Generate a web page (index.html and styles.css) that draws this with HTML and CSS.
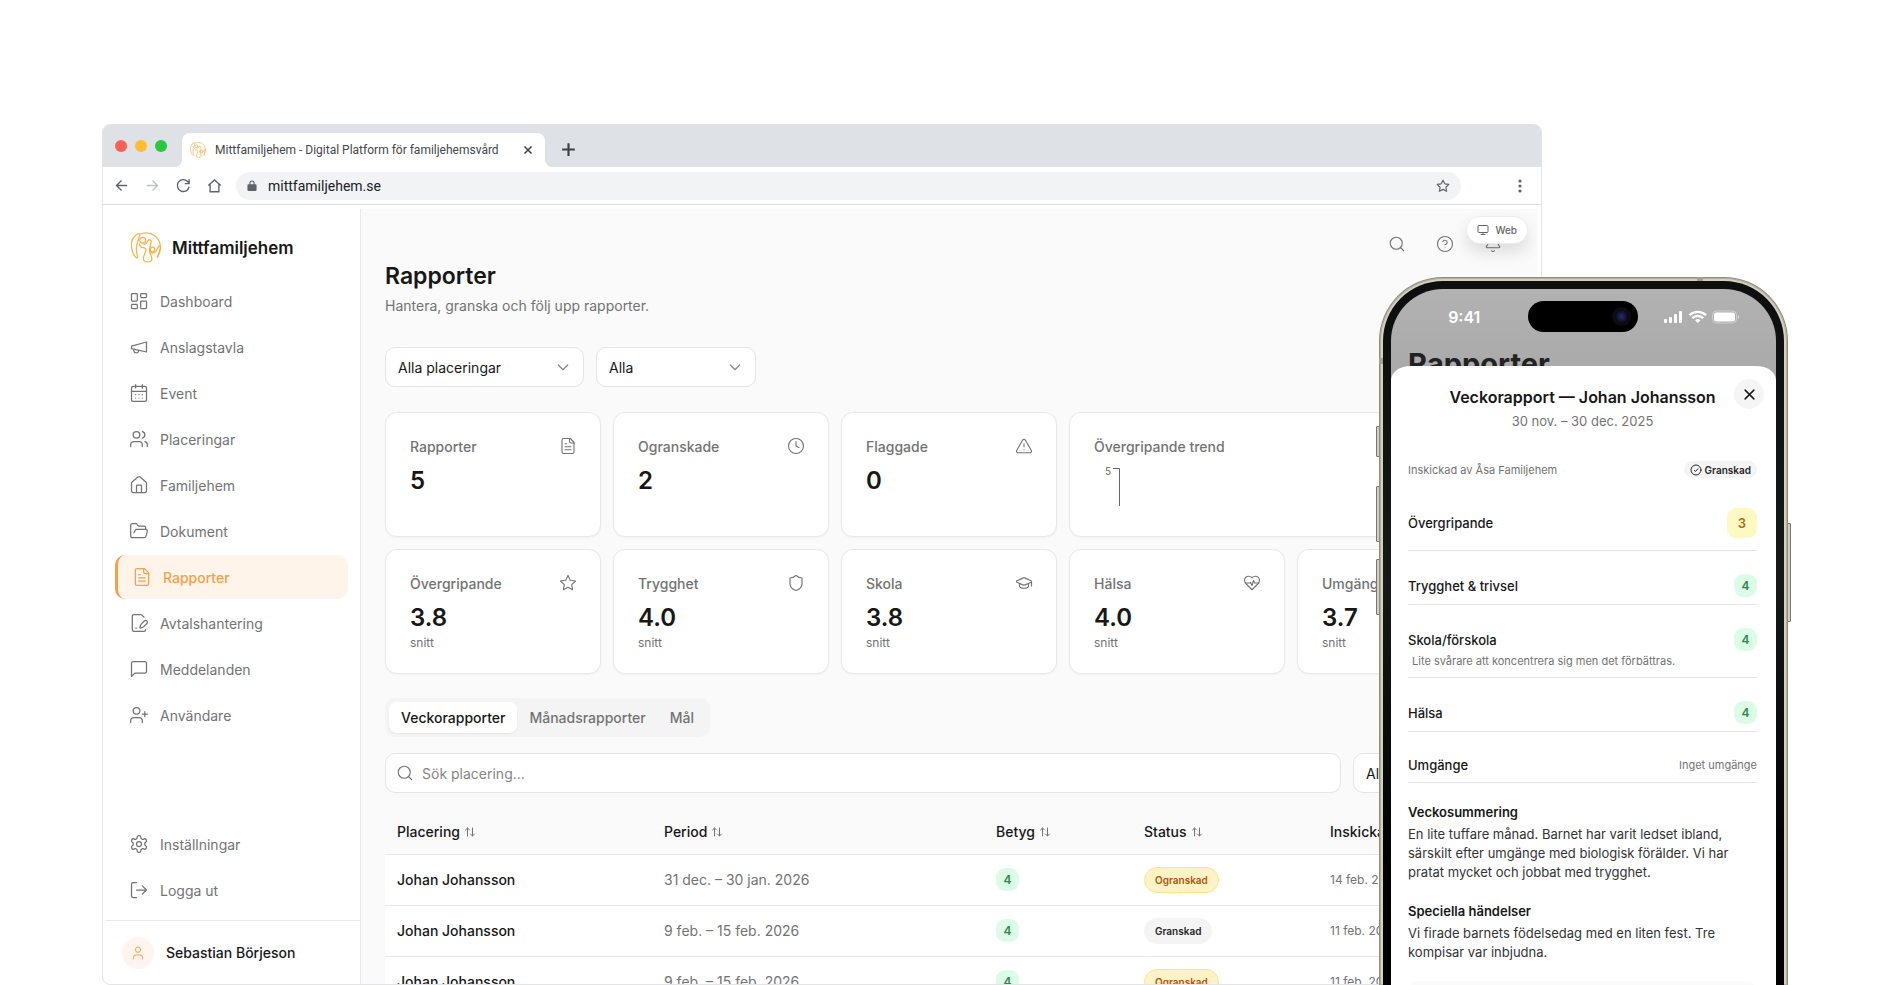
FILE: index.html
```html
<!DOCTYPE html>
<html lang="sv">
<head>
    <meta charset="UTF-8">
    <meta name="viewport" content="width=device-width, initial-scale=1.0">
    <title>Mittfamiljehem - Digital Platform för familjehemsvård</title>
    <link rel="stylesheet" href="styles.css">
</head>
<body>
    <!-- Shared icons -->
    <svg class="sprite" aria-hidden="true">
        <symbol id="i-logo" viewBox="0 0 92 94">
            <path d="M17 7C4 17-1 33 2 49c2 12 7 24 14 29 3 2 5 0 4-4-3-11-5-24-2-36 2-9 6-16 8-25 2-8-3-11-9-6z"/>
            <path d="M30 5c13-4 30-4 43 6 12 10 18 24 17 38-1 10-4 19-9 27"/>
            <circle cx="36" cy="25" r="9"/>
            <path d="M25 36c1 8 8 11 15 12 6 1 7 6 4 13-3 8-7 15-6 22 1 6 6 8 12 8 8 0 14-3 14-9 0-8-6-14-7-23-1-7 1-12 2-17 1-7 5-12 2-17-3-4-9-1-11 5-2 6-5 8-10 7"/>
            <circle cx="66" cy="53" r="7"/>
            <path d="M58 60c6 6 15 5 20-3 3-5 4-12 8-15 4-2 5 4 3 12-2 9-5 17-8 22"/>
        </symbol>
        <symbol id="i-search" viewBox="0 0 24 24"><circle cx="11" cy="11" r="8"/><path d="m21 21-4-4"/></symbol>
        <symbol id="i-file" viewBox="0 0 24 24"><path d="M15 2H6a2 2 0 0 0-2 2v16a2 2 0 0 0 2 2h12a2 2 0 0 0 2-2V7z"/><path d="M14 2v4a2 2 0 0 0 2 2h4M10 9H8M16 13H8M16 17H8"/></symbol>
        <symbol id="i-user" viewBox="0 0 24 24"><path d="M19 21v-2a4 4 0 0 0-4-4H9a4 4 0 0 0-4 4v2"/><circle cx="12" cy="7" r="4"/></symbol>
        <symbol id="i-star" viewBox="0 0 24 24"><path d="m12 2 3.1 6.3 6.9 1-5 4.9 1.2 6.8-6.2-3.2-6.2 3.2L7 14.2 2 9.3l6.9-1z"/></symbol>
        <symbol id="i-sort" viewBox="0 0 24 24"><path d="m3 8 4-4 4 4M7 4v16M21 16l-4 4-4-4M17 20V4"/></symbol>
        <symbol id="i-x" viewBox="0 0 24 24"><path d="M19 5 5 19M5 5l14 14"/></symbol>
    </svg>

    <main class="stage">
        <div class="browser">
            <div class="titlebar">
                <div class="dots">
                    <span class="dot red"></span>
                    <span class="dot yellow"></span>
                    <span class="dot green"></span>
                </div>
                <div class="browser-tab">
                    <svg class="logo-icon favicon"><use href="#i-logo"/></svg>
                    <span class="tab-title">Mittfamiljehem - Digital Platform för familjehemsvård</span>
                    <button class="chrome-btn tab-close" aria-label="Stäng flik"><svg class="icon"><use href="#i-x"/></svg></button>
                </div>
                <button class="chrome-btn new-tab" aria-label="Ny flik"><svg class="icon" viewBox="0 0 24 24"><path d="M12 3v18M3 12h18"/></svg></button>
            </div>

            <div class="toolbar">
                <button class="chrome-btn" aria-label="Bakåt"><svg class="icon" viewBox="0 0 24 24"><path d="M21 12H4M12 4l-8 8 8 8"/></svg></button>
                <button class="chrome-btn disabled" aria-label="Framåt"><svg class="icon" viewBox="0 0 24 24"><path d="M3 12h17M12 4l8 8-8 8"/></svg></button>
                <button class="chrome-btn" aria-label="Ladda om"><svg class="icon" viewBox="0 0 24 24"><path d="M21 14a9.5 9.5 0 1 1-2.5-8.5L21 8M21 2v7h-7"/></svg></button>
                <button class="chrome-btn" aria-label="Hem"><svg class="icon" viewBox="0 0 24 24"><path d="M2 12 12 3l10 9M5 10v12h14V10"/></svg></button>
                <div class="address">
                    <svg class="lock" viewBox="0 0 12 14"><path d="M2 5h8a1.5 1.5 0 0 1 1.5 1.5v5A1.5 1.5 0 0 1 10 13H2A1.5 1.5 0 0 1 .5 11.5v-5A1.5 1.5 0 0 1 2 5z" fill="#5f6368"/><path d="M3.5 6V3.500a2.500 2.500 0 0 1 5 0V6" fill="none" stroke="#5f6368" stroke-width="1.4"/></svg>
                    <input class="url" type="text" value="mittfamiljehem.se" aria-label="Adress">
                    <svg class="icon bookmark"><use href="#i-star"/></svg>
                </div>
                <button class="chrome-btn menu" aria-label="Meny"><svg viewBox="0 0 4 14"><circle cx="2" cy="2" r="1.6"/><circle cx="2" cy="7" r="1.6"/><circle cx="2" cy="12" r="1.6"/></svg></button>
            </div>

            <div class="app">
                <aside class="sidebar">
                    <a class="brand" href="#">
                        <svg class="logo-icon"><use href="#i-logo"/></svg>
                        <span>Mittfamiljehem</span>
                    </a>
                    <nav class="nav">
                        <a class="nav-item" href="#"><svg class="icon" viewBox="0 0 24 24"><rect x="3" y="3" width="7" height="9" rx="1"/><rect x="14" y="3" width="7" height="5" rx="1"/><rect x="14" y="12" width="7" height="9" rx="1"/><rect x="3" y="16" width="7" height="5" rx="1"/></svg>Dashboard</a>
                        <a class="nav-item" href="#"><svg class="icon" viewBox="0 0 24 24"><path d="m3 11 18-5v12L3 14z"/><path d="M11.6 16.8a3 3 0 1 1-5.8-1.6"/></svg>Anslagstavla</a>
                        <a class="nav-item" href="#"><svg class="icon" viewBox="0 0 24 24"><rect x="3" y="4" width="18" height="18" rx="2"/><path d="M8 2v4M16 2v4M3 10h18M8 14h.01M12 14h.01M16 14h.01M8 18h.01M12 18h.01M16 18h.01"/></svg>Event</a>
                        <a class="nav-item" href="#"><svg class="icon" viewBox="0 0 24 24"><path d="M16 21v-2a4 4 0 0 0-4-4H6a4 4 0 0 0-4 4v2"/><circle cx="9" cy="7" r="4"/><path d="M22 21v-2a4 4 0 0 0-3-3.87M16 3.13a4 4 0 0 1 0 7.75"/></svg>Placeringar</a>
                        <a class="nav-item" href="#"><svg class="icon" viewBox="0 0 24 24"><path d="M15 21v-8a1 1 0 0 0-1-1h-4a1 1 0 0 0-1 1v8"/><path d="M3 10a2 2 0 0 1 .7-1.5l7-6a2 2 0 0 1 2.6 0l7 6A2 2 0 0 1 21 10v9a2 2 0 0 1-2 2H5a2 2 0 0 1-2-2z"/></svg>Familjehem</a>
                        <a class="nav-item" href="#"><svg class="icon" viewBox="0 0 24 24"><path d="m6 14 1.5-2.9A2 2 0 0 1 9.24 10H20a2 2 0 0 1 1.94 2.5l-1.54 6a2 2 0 0 1-1.95 1.5H4a2 2 0 0 1-2-2V5a2 2 0 0 1 2-2h3.9a2 2 0 0 1 1.69.9l.81 1.2a2 2 0 0 0 1.67.9H18a2 2 0 0 1 2 2v2"/></svg>Dokument</a>
                        <a class="nav-item active" href="#"><svg class="icon"><use href="#i-file"/></svg>Rapporter</a>
                        <a class="nav-item" href="#"><svg class="icon" viewBox="0 0 24 24"><path d="m18 5-2.4-2.4A2 2 0 0 0 14.2 2H6a2 2 0 0 0-2 2v16a2 2 0 0 0 2 2h12a2 2 0 0 0 2-2"/><path d="M21.4 12.6a2.1 2.1 0 0 0-3-3L14.4 13.6a2 2 0 0 0-.5.9l-.8 2.9a.5.5 0 0 0 .6.6l2.9-.8a2 2 0 0 0 .9-.5zM8 18h1"/></svg>Avtalshantering</a>
                        <a class="nav-item" href="#"><svg class="icon" viewBox="0 0 24 24"><path d="M21 15a2 2 0 0 1-2 2H7l-4 4V5a2 2 0 0 1 2-2h14a2 2 0 0 1 2 2z"/></svg>Meddelanden</a>
                        <a class="nav-item" href="#"><svg class="icon" viewBox="0 0 24 24"><path d="M16 21v-2a4 4 0 0 0-4-4H6a4 4 0 0 0-4 4v2"/><circle cx="9" cy="7" r="4"/><path d="M19 8v6M22 11h-6"/></svg>Användare</a>
                    </nav>
                    <div class="nav nav-bottom">
                        <a class="nav-item" href="#"><svg class="icon" viewBox="0 0 24 24"><path d="M12.22 2h-.44a2 2 0 0 0-2 2v.18a2 2 0 0 1-1 1.73l-.43.25a2 2 0 0 1-2 0l-.15-.08a2 2 0 0 0-2.73.73l-.22.38a2 2 0 0 0 .73 2.73l.15.1a2 2 0 0 1 1 1.72v.51a2 2 0 0 1-1 1.74l-.15.09a2 2 0 0 0-.73 2.73l.22.38a2 2 0 0 0 2.73.73l.15-.08a2 2 0 0 1 2 0l.43.25a2 2 0 0 1 1 1.73V20a2 2 0 0 0 2 2h.44a2 2 0 0 0 2-2v-.18a2 2 0 0 1 1-1.73l.43-.25a2 2 0 0 1 2 0l.15.08a2 2 0 0 0 2.73-.73l.22-.39a2 2 0 0 0-.73-2.73l-.15-.08a2 2 0 0 1-1-1.74v-.5a2 2 0 0 1 1-1.74l.15-.09a2 2 0 0 0 .73-2.73l-.22-.38a2 2 0 0 0-2.73-.73l-.15.08a2 2 0 0 1-2 0l-.43-.25a2 2 0 0 1-1-1.73V4a2 2 0 0 0-2-2z"/><circle cx="12" cy="12" r="3"/></svg>Inställningar</a>
                        <a class="nav-item" href="#"><svg class="icon" viewBox="0 0 24 24"><path d="M9 21H5a2 2 0 0 1-2-2V5a2 2 0 0 1 2-2h4M16 17l5-5-5-5M21 12H9"/></svg>Logga ut</a>
                    </div>
                    <div class="profile">
                        <span class="avatar"><svg class="icon"><use href="#i-user"/></svg></span>
                        <span>Sebastian Börjeson</span>
                    </div>
                </aside>

                <section class="content">
                    <div class="topbar">
                        <button class="icon-btn" aria-label="Sök"><svg class="icon"><use href="#i-search"/></svg></button>
                        <button class="icon-btn" aria-label="Hjälp"><svg class="icon" viewBox="0 0 24 24"><circle cx="12" cy="12" r="10"/><path d="M9.09 9a3 3 0 0 1 5.83 1c0 2-3 3-3 3M12 17h.01"/></svg></button>
                        <button class="icon-btn" aria-label="Aviseringar"><svg class="icon" viewBox="0 0 24 24"><path d="M10.3 21a2 2 0 0 0 3.4 0M3.3 15.3A1 1 0 0 0 4 17h16a1 1 0 0 0 .7-1.7C19.4 14 18 12.5 18 8A6 6 0 0 0 6 8c0 4.5-1.4 6-2.7 7.3"/></svg></button>
                        <span class="web-pill"><svg class="icon" viewBox="0 0 24 24"><rect x="2" y="3" width="20" height="14" rx="2"/><path d="M8 21h8M12 17v4"/></svg>Web</span>
                    </div>

                    <h1>Rapporter</h1>
                    <p class="subtitle">Hantera, granska och följ upp rapporter.</p>

                    <div class="filters">
                        <select class="select wide" aria-label="Placering"><option>Alla placeringar</option></select>
                        <select class="select" aria-label="Status"><option>Alla</option></select>
                    </div>

                    <div class="cards">
                        <article class="card">
                            <div class="card-head">Rapporter<svg class="icon"><use href="#i-file"/></svg></div>
                            <div class="card-value">5</div>
                        </article>
                        <article class="card">
                            <div class="card-head">Ogranskade<svg class="icon" viewBox="0 0 24 24"><circle cx="12" cy="12" r="10"/><path d="M12 6v6l4 2"/></svg></div>
                            <div class="card-value">2</div>
                        </article>
                        <article class="card">
                            <div class="card-head">Flaggade<svg class="icon" viewBox="0 0 24 24"><path d="m21.73 18-8-14a2 2 0 0 0-3.48 0l-8 14A2 2 0 0 0 4 21h16a2 2 0 0 0 1.73-3M12 9v4M12 17h.01"/></svg></div>
                            <div class="card-value">0</div>
                        </article>
                        <article class="card trend">
                            <div class="card-head">Övergripande trend</div>
                            <svg class="trend-chart" viewBox="0 0 60 45"><text x="11" y="14">5</text><path d="M19 7.5h6.5V45"/></svg>
                        </article>
                        <article class="card">
                            <div class="card-head">Övergripande<svg class="icon"><use href="#i-star"/></svg></div>
                            <div class="card-value">3.8</div>
                            <div class="card-note">snitt</div>
                        </article>
                        <article class="card">
                            <div class="card-head">Trygghet<svg class="icon" viewBox="0 0 24 24"><path d="M20 13c0 5-3.5 7.5-7.66 8.95a1 1 0 0 1-.67 0C7.5 20.5 4 18 4 13V6a1 1 0 0 1 1-1c2 0 4.5-1.2 6.24-2.72a1.17 1.17 0 0 1 1.52 0C14.5 3.8 17 5 19 5a1 1 0 0 1 1 1z"/></svg></div>
                            <div class="card-value">4.0</div>
                            <div class="card-note">snitt</div>
                        </article>
                        <article class="card">
                            <div class="card-head">Skola<svg class="icon" viewBox="0 0 24 24"><path d="M21.42 10.92a1 1 0 0 0-.02-1.84L12.83 5.18a2 2 0 0 0-1.66 0L2.6 9.08a1 1 0 0 0 0 1.83l8.57 3.91a2 2 0 0 0 1.66 0zM22 10v6M6 12.5V16a6 3 0 0 0 12 0v-3.5"/></svg></div>
                            <div class="card-value">3.8</div>
                            <div class="card-note">snitt</div>
                        </article>
                        <article class="card">
                            <div class="card-head">Hälsa<svg class="icon" viewBox="0 0 24 24"><path d="M19 14c1.49-1.46 3-3.21 3-5.5A5.5 5.5 0 0 0 16.5 3c-1.76 0-3 .5-4.5 2-1.5-1.5-2.74-2-4.5-2A5.5 5.5 0 0 0 2 8.5c0 2.3 1.5 4.05 3 5.5l7 7z"/><path d="M3.22 12H9.5l.5-1 2 4.5 2-7 1.5 3.5h5.27"/></svg></div>
                            <div class="card-value">4.0</div>
                            <div class="card-note">snitt</div>
                        </article>
                        <article class="card">
                            <div class="card-head">Umgänge</div>
                            <div class="card-value">3.7</div>
                            <div class="card-note">snitt</div>
                        </article>
                    </div>

                    <div class="tabs" role="tablist">
                        <button class="tab active" role="tab" aria-selected="true">Veckorapporter</button>
                        <button class="tab" role="tab">Månadsrapporter</button>
                        <button class="tab" role="tab">Mål</button>
                    </div>

                    <div class="search-row">
                        <label class="search">
                            <svg class="icon"><use href="#i-search"/></svg>
                            <input type="text" placeholder="Sök placering..." aria-label="Sök placering">
                        </label>
                        <select class="select" aria-label="Filter"><option>Alla</option></select>
                    </div>

                    <table class="reports">
                        <thead>
                            <tr>
                                <th class="col-place">Placering<svg class="icon"><use href="#i-sort"/></svg></th>
                                <th class="col-period">Period<svg class="icon"><use href="#i-sort"/></svg></th>
                                <th class="col-grade">Betyg<svg class="icon"><use href="#i-sort"/></svg></th>
                                <th class="col-status">Status<svg class="icon"><use href="#i-sort"/></svg></th>
                                <th>Inskickad</th>
                            </tr>
                        </thead>
                        <tbody>
                            <tr>
                                <td class="name">Johan Johansson</td>
                                <td>31 dec. – 30 jan. 2026</td>
                                <td><span class="grade">4</span></td>
                                <td><span class="badge pending">Ogranskad</span></td>
                                <td class="date">14 feb. 2026</td>
                            </tr>
                            <tr>
                                <td class="name">Johan Johansson</td>
                                <td>9 feb. – 15 feb. 2026</td>
                                <td><span class="grade">4</span></td>
                                <td><span class="badge">Granskad</span></td>
                                <td class="date">11 feb. 2026</td>
                            </tr>
                            <tr>
                                <td class="name">Johan Johansson</td>
                                <td>9 feb. – 15 feb. 2026</td>
                                <td><span class="grade">4</span></td>
                                <td><span class="badge pending">Ogranskad</span></td>
                                <td class="date">11 feb. 2026</td>
                            </tr>
                        </tbody>
                    </table>
                </section>
            </div>
        </div>

        <div class="phone">
            <span class="side-btn action"></span>
            <span class="side-btn vol-up"></span>
            <span class="side-btn vol-down"></span>
            <span class="side-btn power"></span>
            <div class="frame">
                <span class="antenna top"></span>
                <span class="antenna left"></span>
                <div class="bezel">
                    <div class="screen">
                        <div class="statusbar">
                            <span class="time">9:41</span>
                            <span class="island"><span class="camera"></span></span>
                            <svg class="status-icons" viewBox="0 0 76 14" fill="#fff">
                                <rect x="0" y="9" width="3" height="4" rx="1"/><rect x="5" y="7" width="3" height="6" rx="1"/><rect x="10" y="4" width="3" height="9" rx="1"/><rect x="15" y="1" width="3" height="12" rx="1"/>
                                <path d="M25.5 5.2a12 12 0 0 1 16.5 0M28.3 8.2a8 8 0 0 1 11 0" fill="none" stroke="#fff" stroke-width="2.4"/><path d="m33.8 13-2.7-2.7a4 4 0 0 1 5.4 0z"/>
                                <rect x="48.5" y="1" width="24" height="12" rx="4" fill="none" stroke="#fff" stroke-opacity=".4"/><rect x="50" y="2.5" width="21" height="9" rx="2.5"/><path d="M74 5v4c1.6-.6 1.6-3.4 0-4z" opacity=".5"/>
                            </svg>
                        </div>
                        <div class="behind">Rapporter</div>
                        <div class="sheet">
                            <button class="close" aria-label="Stäng"><svg class="icon"><use href="#i-x"/></svg></button>
                            <h2>Veckorapport — Johan Johansson</h2>
                            <p class="sheet-date">30 nov. – 30 dec. 2025</p>
                            <div class="meta">
                                <span>Inskickad av Åsa Familjehem</span>
                                <span class="badge small"><svg class="icon" viewBox="0 0 24 24"><circle cx="12" cy="12" r="10"/><path d="m8.5 12.5 2.5 2.5 5-5.5"/></svg>Granskad</span>
                            </div>
                            <div class="score overall"><div class="score-head">Övergripande<span class="grade">3</span></div></div>
                            <div class="score"><div class="score-head">Trygghet &amp; trivsel<span class="grade">4</span></div></div>
                            <div class="score">
                                <div class="score-head">Skola/förskola<span class="grade">4</span></div>
                                <p class="score-note">Lite svårare att koncentrera sig men det förbättras.</p>
                            </div>
                            <div class="score"><div class="score-head">Hälsa<span class="grade">4</span></div></div>
                            <div class="score"><div class="score-head">Umgänge<span class="none">Inget umgänge</span></div></div>
                            <div class="notes">
                                <div>
                                    <h3>Veckosummering</h3>
                                    <p>En lite tuffare månad. Barnet har varit ledset ibland, särskilt efter umgänge med biologisk förälder. Vi har pratat mycket och jobbat med trygghet.</p>
                                </div>
                                <div>
                                    <h3>Speciella händelser</h3>
                                    <p>Vi firade barnets födelsedag med en liten fest. Tre kompisar var inbjudna.</p>
                                </div>
                                <div class="box"></div>
                            </div>
                        </div>
                    </div>
                </div>
            </div>
        </div>
    </main>
</body>
</html>
```

FILE: styles.css
```css
* {
    margin: 0;
    padding: 0;
    box-sizing: border-box;
}

body {
    background: #fff;
    color: #171717;
    font-family: Inter, "Liberation Sans", sans-serif;
    font-size: 14px;
    overflow: hidden;
}

button,
input,
select {
    font: inherit;
    color: inherit;
    border: none;
    background: none;
}

button {
    cursor: pointer;
}

a {
    color: inherit;
    text-decoration: none;
}

.sprite {
    position: absolute;
    width: 0;
    height: 0;
}

.icon {
    width: 18px;
    height: 18px;
    flex: none;
    fill: none;
    stroke: currentColor;
    stroke-width: 1.5;
    stroke-linecap: round;
    stroke-linejoin: round;
}

.logo-icon {
    width: 30px;
    height: 31px;
    flex: none;
    fill: none;
    stroke: #f9b44c;
    stroke-width: 4;
    stroke-linecap: round;
    stroke-linejoin: round;
}

.stage {
    position: relative;
    height: 100vh;
    padding: 124px 102px 0;
}

/* Browser window */
.browser {
    display: flex;
    flex-direction: column;
    height: 100%;
    margin-right: 247px;
    border: 1px solid #e4e4e6;
    border-radius: 8px;
    overflow: hidden;
    background: #fff;
}

.titlebar {
    display: flex;
    align-items: center;
    height: 42px;
    flex: none;
    padding-left: 12px;
    background: #dee1e6;
}

.dots {
    display: flex;
    gap: 8px;
    width: 67px;
}

.dot {
    width: 12px;
    height: 12px;
    border-radius: 50%;
}

.red { background: #ff5f57; }
.yellow { background: #febc2e; }
.green { background: #28c840; }

.browser-tab {
    position: relative;
    display: flex;
    align-items: center;
    align-self: flex-end;
    width: 363px;
    height: 34px;
    padding: 0 10px 0 8px;
    border-radius: 8px 8px 0 0;
    background: #fff;
    font-family: Roboto, "Liberation Sans", sans-serif;
    font-size: 12px;
    color: #45474a;
}

.browser-tab::before,
.browser-tab::after {
    content: "";
    position: absolute;
    bottom: 0;
    width: 8px;
    height: 8px;
}

.browser-tab::before {
    left: -8px;
    background: radial-gradient(circle at 0 0, transparent 8px, #fff 8px);
}

.browser-tab::after {
    right: -8px;
    background: radial-gradient(circle at 100% 0, transparent 8px, #fff 8px);
}

.favicon {
    width: 16px;
    height: 16px;
    margin-right: 9px;
}

.tab-title {
    flex: 1;
    white-space: nowrap;
}

.chrome-btn {
    display: flex;
    align-items: center;
    justify-content: center;
    width: 15px;
    height: 15px;
    color: #5f6368;
}

.chrome-btn .icon {
    width: 15px;
    height: 15px;
    stroke-width: 2.2;
    stroke-linecap: butt;
    stroke-linejoin: miter;
}

.chrome-btn.tab-close .icon {
    width: 12px;
    height: 12px;
    stroke: #3c4043;
    stroke-width: 3;
}

.new-tab {
    margin: 7px 0 0 16px;
}

.chrome-btn.new-tab .icon {
    width: 17px;
    height: 17px;
    stroke: #3c4043;
    stroke-width: 3;
}

.disabled {
    color: #bdc1c6;
}

.toolbar {
    display: flex;
    align-items: center;
    gap: 16px;
    height: 38px;
    flex: none;
    padding: 0 14px 0 11px;
    border-bottom: 1px solid #dcdde0;
}

.address {
    display: flex;
    align-items: center;
    flex: 1;
    height: 28px;
    margin: 0 35px 0 -2px;
    padding: 0 11px;
    border-radius: 14px;
    background: #f1f3f4;
}

.lock {
    width: 10px;
    height: 12px;
    margin-right: 11px;
}

.url {
    flex: 1;
    outline: none;
    font-family: Roboto, "Liberation Sans", sans-serif;
    font-size: 14px;
    color: #202124;
}

.bookmark {
    width: 14px;
    height: 14px;
    stroke: #5f6368;
    stroke-width: 2;
}

.menu svg {
    width: 4px;
    height: 14px;
    fill: #5f6368;
}

/* App shell */
.app {
    display: flex;
    flex: 1;
    min-height: 0;
    padding: 4px 4px 0 3px;
}

.sidebar {
    display: flex;
    flex-direction: column;
    width: 255px;
    flex: none;
    border-right: 1px solid #e8e8e8;
}

.brand {
    display: flex;
    align-items: center;
    gap: 11px;
    padding: 23px 25px 16px;
    font-size: 17px;
    font-weight: 600;
}

.nav {
    display: flex;
    flex-direction: column;
    gap: 2px;
    padding: 0 12px 0 9px;
}

.nav-item {
    display: flex;
    align-items: center;
    gap: 11px;
    height: 44px;
    padding: 0 14px;
    border-radius: 10px;
    color: #737373;
}

.nav-item .icon {
    width: 20px;
    height: 20px;
}

.nav-item.active {
    border-left: 3px solid #f4a04c;
    background: #fff4ea;
    color: #f4a04c;
    font-weight: 500;
}

.nav-bottom {
    margin-top: auto;
    padding-bottom: 8px;
}

.profile {
    display: flex;
    align-items: center;
    gap: 12px;
    height: 64px;
    padding-left: 16px;
    border-top: 1px solid #e8e8e8;
    font-weight: 500;
}

.avatar {
    display: flex;
    align-items: center;
    justify-content: center;
    width: 32px;
    height: 32px;
    border-radius: 50%;
    background: #fff4ee;
    color: #f4a04c;
}

.avatar .icon {
    width: 16px;
    height: 16px;
}

.content {
    flex: 1;
    min-width: 0;
    padding: 0 24px;
    overflow: hidden;
    background: #fafafa;
}

.topbar {
    position: relative;
    display: flex;
    justify-content: flex-end;
    align-items: flex-end;
    gap: 8px;
    height: 55px;
}

.icon-btn {
    display: flex;
    align-items: center;
    justify-content: center;
    width: 40px;
    height: 40px;
    color: #737373;
}

.web-pill {
    position: absolute;
    top: 7px;
    right: -15px;
    display: flex;
    align-items: center;
    gap: 6px;
    height: 28px;
    padding: 0 10px;
    border: 1px solid #ececec;
    border-radius: 14px;
    background: #fff;
    box-shadow: 0 8px 16px rgba(0, 0, 0, 0.12);
    color: #666;
    font-size: 10px;
    font-weight: 500;
}

.web-pill .icon {
    width: 12px;
    height: 12px;
    stroke-width: 2;
}

h1 {
    font-size: 23px;
    font-weight: 600;
    line-height: 30px;
    margin-top: -3px;
}

.subtitle {
    margin: 5px 0 31px;
    line-height: 20px;
    color: #737373;
}

.filters,
.search-row {
    display: flex;
    gap: 12px;
}

.select {
    width: 160px;
    height: 40px;
    padding: 0 36px 0 12px;
    border: 1px solid #e5e5e5;
    border-radius: 10px;
    appearance: none;
    background: #fff url("data:image/svg+xml,%3Csvg xmlns='http://www.w3.org/2000/svg' viewBox='0 0 24 24' fill='none' stroke='%238a8a8a' stroke-width='2' stroke-linecap='round' stroke-linejoin='round'%3E%3Cpath d='m5 9 7 7 7-7'/%3E%3C/svg%3E") no-repeat right 12px center / 16px;
}

.select.wide {
    width: 199px;
}

.cards {
    display: grid;
    grid-template-columns: repeat(5, 1fr);
    grid-auto-rows: 1fr;
    gap: 12px;
    margin: 25px 0 24px;
}

.card {
    padding: 23px 23px 20px 24px;
    border: 1px solid #e8e8e8;
    border-radius: 12px;
    background: #fff;
    box-shadow: 0 1px 2px rgba(0, 0, 0, 0.04);
}

.trend {
    grid-column: span 2;
}

.card-head {
    display: flex;
    justify-content: space-between;
    align-items: center;
    height: 20px;
    font-weight: 500;
    color: #737373;
}

.card-value {
    margin-top: 10px;
    font-size: 24px;
    font-weight: 600;
    line-height: 30px;
}

.card-note {
    line-height: 20px;
    font-size: 12px;
    color: #737373;
}

.trend-chart {
    display: block;
    width: 60px;
    height: 45px;
    margin-top: 5px;
    fill: none;
    stroke: #666;
}

.trend-chart text {
    stroke: none;
    fill: #666;
    font-size: 10px;
}

.tabs {
    display: inline-flex;
    padding: 4px;
    border-radius: 10px;
    background: #f4f4f4;
}

.tab {
    height: 31px;
    padding: 0 12px;
    border-radius: 8px;
    font-weight: 500;
    color: #737373;
}

.tab.active {
    background: #fff;
    color: #171717;
    box-shadow: 0 1px 2px rgba(0, 0, 0, 0.06);
}

.search-row {
    margin: 16px 0;
}

.search {
    display: flex;
    align-items: center;
    gap: 8px;
    flex: 1;
    height: 40px;
    padding: 0 10px;
    border: 1px solid #e5e5e5;
    border-radius: 10px;
    background: #fff;
    color: #737373;
}

.search input {
    flex: 1;
    outline: none;
}

.search input::placeholder {
    color: #858585;
}

.reports {
    width: 100%;
    table-layout: fixed;
    border-collapse: collapse;
    text-align: left;
}

.reports th,
.reports td {
    padding: 0 12px;
    border-bottom: 1px solid #e8e8e8;
}

.reports th {
    height: 45px;
    font-weight: 500;
    white-space: nowrap;
}

.reports th .icon {
    width: 12px;
    height: 12px;
    margin-left: 4px;
    vertical-align: -1px;
    stroke: #737373;
    stroke-width: 2;
}

.reports td {
    height: 51px;
    background: #fff;
    color: #737373;
}

.reports .name {
    color: #171717;
    font-weight: 500;
}

.reports .date {
    font-size: 12px;
}

.col-place { width: 267px; }
.col-period { width: 332px; }
.col-grade { width: 148px; }
.col-status { width: 186px; }

.grade {
    display: inline-flex;
    align-items: center;
    justify-content: center;
    width: 23px;
    height: 23px;
    border-radius: 9px;
    background: #dcfce7;
    color: #2f8a50;
    font-size: 12px;
    font-weight: 600;
}

.badge {
    display: inline-flex;
    align-items: center;
    height: 26px;
    padding: 0 11px;
    border-radius: 13px;
    background: #f4f4f4;
    color: #262626;
    font-size: 10px;
    font-weight: 600;
}

.badge.pending {
    padding: 0 10px;
    border: 1px solid #fde68a;
    background: #fef3c7;
    color: #b45309;
}

/* Phone */
.phone {
    position: absolute;
    top: 277px;
    right: 103px;
    bottom: 0;
    width: 409px;
}

.frame {
    position: relative;
    height: 100%;
    padding: 3px 3px 0;
    border: 1px solid #8f8c80;
    border-bottom: none;
    border-radius: 64px 64px 0 0;
    background: #d5d1bf;
    box-shadow: inset 0 0 0 1px #b3af9f;
}

.bezel {
    height: 100%;
    padding: 8px 8px 0;
    border-radius: 60px 60px 0 0;
    background: linear-gradient(#0c0f0e, #151918 300px, #000 600px);
}

.side-btn {
    position: absolute;
    left: -3px;
    width: 6px;
    border: 1px solid #77766f;
    border-radius: 1px;
    background: #cfcec8;
}

.action { top: 149px; height: 31px; }
.vol-up { top: 209px; height: 56px; }
.vol-down { top: 282px; height: 56px; }
.power { top: 246px; left: auto; right: -3px; height: 99px; }

.antenna {
    position: absolute;
    background: #a5a294;
}

.antenna.top {
    top: -1px;
    right: 84px;
    width: 6px;
    height: 4px;
}

.antenna.left {
    top: 80px;
    left: -1px;
    width: 4px;
    height: 6px;
}

.screen {
    display: flex;
    flex-direction: column;
    height: 100%;
    border-radius: 52px 52px 0 0;
    overflow: hidden;
    background: linear-gradient(#b2b2b2, #a9a9a9 90px);
}

.statusbar {
    display: grid;
    grid-template-columns: 1fr 110px 1fr;
    align-items: center;
    height: 31px;
    margin: 12px 0;
    padding-right: 2px;
    flex: none;
    color: #fff;
}

.time {
    padding-left: 10px;
    text-align: center;
    font-size: 16px;
    font-weight: 600;
}

.island {
    display: flex;
    align-items: center;
    justify-content: flex-end;
    height: 31px;
    padding-right: 7px;
    border-radius: 16px;
    background: #000;
}

.camera {
    width: 19px;
    height: 19px;
    border-radius: 50%;
    background: radial-gradient(circle, #262668 1px, #11112e 5px, #0c0a12 6px);
}

.status-icons {
    width: 76px;
    height: 14px;
    margin-left: 26px;
}

.behind {
    height: 22px;
    padding-left: 17px;
    flex: none;
    font-size: 29px;
    font-weight: 700;
    line-height: 40px;
    color: #222;
}

.sheet {
    position: relative;
    flex: 1;
    padding: 20px 19px 0 17px;
    border-radius: 20px 20px 0 0 / 14px 14px 0 0;
    background: #fff;
}

.close {
    position: absolute;
    top: 13px;
    right: 12px;
    display: flex;
    align-items: center;
    justify-content: center;
    width: 30px;
    height: 30px;
    border-radius: 50%;
    background: #f5f5f5;
}

.close .icon {
    width: 15px;
    height: 15px;
    stroke-width: 2.4;
}

h2 {
    font-size: 16px;
    font-weight: 600;
    line-height: 22px;
    text-align: center;
}

.sheet-date {
    margin-top: 3px;
    line-height: 20px;
    text-align: center;
    font-size: 13px;
    color: #737373;
}

.meta {
    display: flex;
    justify-content: space-between;
    align-items: center;
    height: 17px;
    margin-top: 30px;
    font-size: 11px;
    color: #737373;
}

.badge.small {
    gap: 3px;
    height: 17px;
    padding: 0 6px;
}

.badge.small .icon {
    width: 12px;
    height: 12px;
    stroke-width: 2;
}

.score {
    padding: 23px 0 7px;
    border-bottom: 1px solid #e6e6e6;
}

.score-head {
    display: flex;
    justify-content: space-between;
    align-items: center;
    min-height: 20px;
    font-size: 13px;
    font-weight: 500;
}

.overall {
    padding: 30px 0 12px;
}

.overall .grade {
    width: 30px;
    height: 30px;
    background: #fef9c3;
    color: #a8701c;
    font-size: 13px;
}

.score-note {
    margin-top: 2px;
    padding-left: 4px;
    line-height: 17px;
    font-size: 11px;
    color: #737373;
}

.none {
    font-size: 11px;
    font-weight: 400;
    color: #737373;
}

.notes {
    display: flex;
    flex-direction: column;
    gap: 19px;
    padding-top: 19px;
}

h3 {
    font-size: 13px;
    font-weight: 600;
    line-height: 20px;
}

.notes p {
    margin-top: 3px;
    font-size: 13px;
    line-height: 19px;
    color: #333;
}

.box {
    height: 60px;
    border-radius: 10px;
    background: #fafafa;
}
```
